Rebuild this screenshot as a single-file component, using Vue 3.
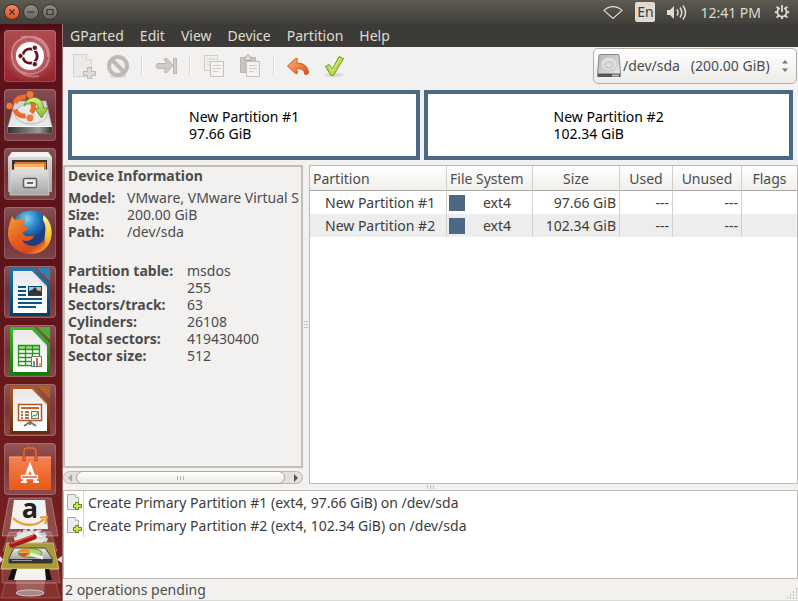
<script setup>
import { ref } from 'vue'

const menus = ['GParted', 'Edit', 'View', 'Device', 'Partition', 'Help']
const launchers = ['Search your computer', 'Install Ubuntu', 'Files', 'Firefox', 'Writer', 'Calc', 'Impress', 'Software Center']
const device = ref('sda')
const partitions = [
  { name: 'New Partition #1', fs: 'ext4', size: '97.66 GiB', grow: 352 },
  { name: 'New Partition #2', fs: 'ext4', size: '102.34 GiB', grow: 369 }
]
const summary = [
  ['Model:', 'VMware, VMware Virtual S'],
  ['Size:', '200.00 GiB'],
  ['Path:', '/dev/sda']
]
const geometry = [
  ['Partition table:', 'msdos'],
  ['Heads:', '255'],
  ['Sectors/track:', '63'],
  ['Cylinders:', '26108'],
  ['Total sectors:', '419430400'],
  ['Sector size:', '512']
]
const operations = [
  'Create Primary Partition #1 (ext4, 97.66 GiB) on /dev/sda',
  'Create Primary Partition #2 (ext4, 102.34 GiB) on /dev/sda'
]
</script>

<template>
  <div class="desktop">
    <header class="panel">
      <div class="window-buttons">
        <button class="wb close" aria-label="Close"><svg viewBox="0 0 16 16"><path d="M5.5 5.5l5 5M10.5 5.5l-5 5" /></svg></button>
        <button class="wb" aria-label="Minimize"><svg viewBox="0 0 16 16"><path d="M4.500 8h7" /></svg></button>
        <button class="wb" aria-label="Maximize"><svg viewBox="0 0 16 16"><path d="M5 5.500h6v5H5z" /></svg></button>
      </div>
      <div class="indicators">
        <svg class="ind" viewBox="0 0 20 20" aria-hidden="true"><path d="M1 8.500C6 3.300 14 3.300 19 8.500L10 16.500z" fill="none" stroke="#dfdbd2" stroke-width="1.100" /></svg>
        <span class="lang">En</span>
        <svg class="ind" viewBox="0 0 20 20" aria-hidden="true">
          <path d="M0 8h3l4-4v13l-4-4H0z" fill="#dfdbd2" />
          <path d="M10 7.500q2 3 0 6M13 5.500q3.500 5 0 10M16 3.500q5 7 0 14" fill="none" stroke="#dfdbd2" stroke-width="1.500" />
        </svg>
        <time class="clock">12:41 PM</time>
        <svg class="gear" viewBox="0 0 18 18" aria-hidden="true">
          <g stroke="#dfdbd2" fill="none">
            <path d="M6.500 4.500a5.200 5.200 0 1 0 5 0" stroke-width="2" />
            <path d="M9 1v8" stroke-width="2" />
            <path d="M9 14v3M1 9.300h3M14 9.300h3M3 3l2.500 2.500M15 3l-2.500 2.500M3 15.300l2.200-2.200M15 15.300l-2.200-2.200" stroke-width="2.200" />
          </g>
        </svg>
      </div>
    </header>

    <div class="body">
      <nav class="launcher" aria-label="Launcher">
        <button v-for="(name, i) in launchers" :key="name" class="tile" :class="{ dash: i === 0 }" :aria-label="name">
          <svg v-if="i === 0" viewBox="0 0 52 52">
            <defs><radialGradient id="dashbg"><stop offset="0" stop-color="#e8b8b8" /><stop offset=".6" stop-color="#c06468" /><stop offset="1" stop-color="#a73a40" stop-opacity="0" /></radialGradient></defs>
            <circle cx="26" cy="26" r="27" fill="url(#dashbg)" opacity=".75" />
            <path d="M8 22C9 10 24 3 36 9c10 6 12 20 5 29M44 30c-2 12-17 18-28 11C8 35 6 26 9 18M17 7c13-2 27 5 27 20M35 46C21 49 7 39 8 25" fill="none" stroke="#fff" stroke-opacity=".35" stroke-width="1.500" />
            <circle cx="26" cy="26" r="14" fill="#fff" />
            <circle cx="26" cy="26" r="7.200" fill="none" stroke="#64141d" stroke-width="2.800" stroke-dasharray="13 2.080" stroke-dashoffset="6.500" />
            <g fill="#64141d" stroke="#fff"><circle cx="16.500" cy="26" r="2.700" /><circle cx="30.800" cy="17.800" r="2.700" /><circle cx="30.800" cy="34.200" r="2.700" /></g>
          </svg>
          <svg v-else-if="i === 1" viewBox="0 0 52 52">
            <defs>
              <linearGradient id="diskTop" x2="0" y2="1"><stop stop-color="#cfcfcf" /><stop offset="1" stop-color="#f2f2f2" /></linearGradient>
              <linearGradient id="diskFront"><stop stop-color="#333" /><stop offset=".7" stop-color="#9c9c9c" /><stop offset="1" stop-color="#333" /></linearGradient>
              <linearGradient id="greenArrow" x2="0" y2="1"><stop stop-color="#d9ef85" /><stop offset="1" stop-color="#86b52e" /></linearGradient>
            </defs>
            <path d="M11 12h31l6 26v6H4v-6z" fill="url(#diskTop)" stroke="#aaa" stroke-width=".7" />
            <ellipse cx="27" cy="25" rx="16" ry="10" fill="#e8e8e8" stroke="#bbb" />
            <path d="M4 38h44v6H4z" fill="url(#diskFront)" />
            <path d="M4 37.500h44" stroke="#fff" />
            <circle cx="20" cy="17.500" r="9.500" fill="none" stroke="#f26a22" stroke-width="5" stroke-dasharray="13.500 6.400" stroke-dashoffset="6.750" />
            <g fill="#f47b32"><circle cx="5.500" cy="17" r="3.200" /><circle cx="26" cy="5.500" r="3.400" /><circle cx="26" cy="29" r="3.400" /></g>
            <path d="M20 17c2-10 16-12 19-1l.5 3H44l-6.500 10L31 19.500h3.500c-1-7-9-8-14.500-2.500z" fill="url(#greenArrow)" stroke="#6a9620" />
          </svg>
          <svg v-else-if="i === 2" viewBox="0 0 52 52">
            <defs><linearGradient id="cab" x2="0" y2="1"><stop stop-color="#e0e0e0" /><stop offset="1" stop-color="#a5a5a5" /></linearGradient></defs>
            <path d="M8 4h36l4 5v35H4V9z" fill="url(#cab)" />
            <path d="M8 4h36l3 5H5z" fill="#f3f3f3" />
            <path d="M8 12h35v12H8z" fill="#3b302b" />
            <path d="M11 14h31v8H11z" fill="#e0772f" /><path d="M10 16h30v7H10z" fill="#f7b26a" /><path d="M11 19h29v5H11z" fill="#fbe1bd" />
            <path d="M7 22h37l1 25H6z" fill="url(#cab)" stroke="#d8d8d8" stroke-width=".8" />
            <rect x="19.500" y="30.500" width="13" height="9" rx="1.500" fill="#eee" stroke="#5f5f5f" stroke-width="1.500" />
            <path d="M23 35h6" stroke="#666" stroke-width="2" />
          </svg>
          <svg v-else-if="i === 3" viewBox="0 0 52 52">
            <defs>
              <radialGradient id="globe" cx=".4" cy=".2"><stop stop-color="#7fd1f4" /><stop offset=".5" stop-color="#2b86c9" /><stop offset="1" stop-color="#173f86" /></radialGradient>
              <linearGradient id="fox" x2=".8" y2="1"><stop stop-color="#f6a233" /><stop offset=".45" stop-color="#e6601e" /><stop offset=".8" stop-color="#d5491d" /><stop offset="1" stop-color="#f7b52c" /></linearGradient>
              <linearGradient id="tail" x2="0" y2="1"><stop stop-color="#fff3a0" /><stop offset=".5" stop-color="#fccf37" /><stop offset="1" stop-color="#ef7f22" /></linearGradient>
            </defs>
            <circle cx="27" cy="24" r="20.500" fill="url(#globe)" />
            <path d="M8 9c1 2 2 3 3 4 2-1 4-1 6 0l4-3c0 3-1 5-3 7 1 2 4 2 7 3-1 3-4 4-6 5 0 2 1 3 3 4 3 1 5-1 8 0-2 5-7 6-12 4 4 7 15 8 21 1 5-6 6-13 3-20 6 7 7 16 2 24-4 6-10 9-17 9C14 47 4 38 4 27 4 19 6 16 8 9z" fill="url(#fox)" />
            <path d="M39 8c5 3 8 9 8.500 15 1 9-3 17-9 21 3-6 3-9 2-13 1-7 2-12-1.500-18 0-2 0-3 0-5z" fill="url(#tail)" />
          </svg>
          <svg v-else-if="i < 7" viewBox="0 0 52 52" class="doc" :class="['', '', '', '', 'writer', 'calc', 'impress'][i]">
            <defs><linearGradient :id="'edge' + i" x2="0" y2="1"><stop class="s1" /><stop offset="1" class="s2" /></linearGradient><linearGradient id="paper" x2="0" y2="1"><stop stop-color="#e9e9e9" /><stop offset="1" stop-color="#fff" /></linearGradient></defs>
            <path d="M6 2h24l16 16v32H6z" :fill="`url(#edge${i})`" />
            <path class="corner" d="M33 2h13v13z" />
            <path d="M9 5h19l15 15v27H9z" fill="url(#paper)" />
            <path d="M28 5l1 0 14 14v3z" fill="#888" opacity=".35" />
            <g v-if="i === 4">
              <path d="M14 21h8M14 25h8M14 29h8M14 33h24M14 37h24M14 41h18" stroke="#0b5488" stroke-width="2" />
              <rect x="24.500" y="20.500" width="13" height="9" fill="#8fc7ee" stroke="#0b4a78" />
              <path d="M25 29v-4l3-1 3-3 3 4 2-1 1 2v3z" fill="#333" /><circle cx="35" cy="23" r="1.500" fill="#e8c33a" />
            </g>
            <g v-else-if="i === 5">
              <path d="M14.500 20.500h21v20h-21z" fill="#fff" /><path d="M15 21h20v4H15z" fill="#8fdc7a" />
              <path d="M14.500 20.500h21v20h-21zM14.500 24.500h21M14.500 28.500h21M14.500 32.500h21M14.500 36.500h21M21.500 20v20M28.500 20v20" fill="none" stroke="#259515" stroke-width="1.300" />
              <rect x="27.500" y="31.500" width="10" height="10" fill="#fff" stroke="#777" /><path d="M29 36h2v5h-2z" fill="#3c9bd8" /><path d="M32 33h2v8h-2z" fill="#e06427" /><path d="M35 38h2v3h-2z" fill="#eabc2e" />
            </g>
            <g v-else>
              <rect x="14.500" y="20.500" width="23" height="16" fill="#fff" stroke="#b7551d" stroke-width="1.500" />
              <path d="M17 24h18" stroke="#c96026" stroke-width="2" /><path d="M17 28h2M21 28h4M17 31h2M21 31h4M17 34h2M21 34h4" stroke="#8d4016" stroke-width="1.500" />
              <rect x="27.500" y="27.500" width="7" height="7" fill="#eee" stroke="#777" /><path d="M28 33l2-2 2 1 2-4" fill="none" stroke="#3a9c20" />
              <path d="M20 42l6-4 6 4M26 37v4" fill="none" stroke="#777" stroke-width="2" />
            </g>
          </svg>
          <svg v-else viewBox="0 0 52 52">
            <defs><linearGradient id="bag" x2="0" y2="1"><stop stop-color="#f58252" /><stop offset="1" stop-color="#e8581a" /></linearGradient></defs>
            <path d="M5 14h42v33H5z" fill="url(#bag)" /><path d="M5 14h42" stroke="#ffae83" />
            <path d="M20 18V9q0-4 3-4h6q3 0 3 4v9" fill="none" stroke="#a8441f" stroke-width="3" /><path d="M20 17V9q0-4 3-4h6q3 0 3 4v8" fill="none" stroke="#e66a3c" stroke-width="1.500" />
            <path d="M20 39l6-16 6 16" fill="none" stroke="#fff" stroke-width="3.200" /><path d="M17 39h6M29 39h6" stroke="#fff" stroke-width="2" />
            <rect x="17.500" y="32.500" width="16" height="3" fill="#ef6e38" stroke="#fff" stroke-width="1.300" />
          </svg>
        </button>
        <div class="folded" role="img" aria-label="More applications">
          <svg viewBox="0 0 62 104">
            <defs><linearGradient id="fd" x2="0" y2="1"><stop stop-color="#eee" /><stop offset="1" stop-color="#8b8b8b" /></linearGradient></defs>
            <path d="M9 1h42l7 38H2z" fill="#fff" fill-opacity=".2" stroke="#fff" stroke-opacity=".3" />
            <path d="M14 3h31l3 29H10z" fill="#f2f2f2" />
            <text x="30" y="21" text-anchor="middle" class="amazon">a</text>
            <path d="M13 21c9 9 23 9 31 1" fill="none" stroke="#f29a22" stroke-width="2.200" /><path d="M40 20.500l7-.5-2 7" fill="none" stroke="#f29a22" stroke-width="2" />
            <path d="M9 35h42l6 19H3z" fill="#fff" fill-opacity=".16" stroke="#fff" stroke-opacity=".25" />
            <ellipse cx="31" cy="41" rx="15" ry="7" fill="#ececec" stroke="#d5d5d5" stroke-width="4" stroke-dasharray="4 2.500" />
            <ellipse cx="31" cy="41" rx="14" ry="6" fill="#e6e6e6" />
            <path d="M7 46h46l6 26H1z" fill="#ab9a3a" stroke="#c9bb5c" />
            <path d="M33 37q2-5 9-4l-3 2 2 3 6-1q-3 5-9 4z" fill="#eee" stroke="#999" stroke-width=".6" />
            <path d="M12 48l22-8" stroke="#a81a1a" stroke-width="5.500" stroke-linecap="round" /><path d="M11 46.500l22-8" stroke="#ec6a5e" stroke-width="1.200" />
            <path d="M14 51h31l7 10v5H9v-5z" fill="url(#fd)" stroke="#444" /><path d="M9 62h43v4H9z" fill="#333" /><path d="M12 63.500h20" stroke="#999" />
            <ellipse cx="30" cy="56" rx="12" ry="4.500" fill="#a9d86b" stroke="#638d35" /><path d="M30 56l-11-1q1-4 10-3.500z" fill="#f58c31" /><path d="M30 56H18.500q0 3.500 6 4z" fill="#e94c2f" /><path d="M30 57l13 4" stroke="#eee" stroke-width="3" />
            <path d="M2 72h56l2 14H2z" fill="#fff" fill-opacity=".12" stroke="#fff" stroke-opacity=".2" />
            <path d="M12 72h37l3 11H8z" fill="#111" /><path d="M17 72h28l1 11H14z" fill="#f2f2f2" />
            <path d="M5 86h51l4 15H1z" fill="#fff" fill-opacity=".08" stroke="#fff" stroke-opacity=".2" />
            <path d="M16 83h29l-1 14H17z" fill="#fff" fill-opacity=".22" /><ellipse cx="30" cy="96" rx="14" ry="3" fill="#a08a88" stroke="#d2c5c2" />
            <path d="M0 59l3 3.500-3 3.500zM62 59l-5 3.500 5 3.500z" fill="#e6e1dc" />
          </svg>
        </div>
      </nav>

      <main class="window">
        <nav class="menubar" aria-label="Menu">
          <button v-for="m in menus" :key="m" class="menu">{{ m }}</button>
        </nav>

        <div class="toolbar">
          <div class="tools">
            <button class="tool" aria-label="New" disabled>
              <svg viewBox="0 0 24 24"><path d="M3.500 .5h13l5 5v17h-18z" fill="#eceae8" stroke="#d5d2cf" /><path d="M16.500 .5v5h5" fill="#f7f6f5" stroke="#d5d2cf" /><path d="M17.500 13.500h4v4h4v4h-4v3h-4v-3h-4v-4h4z" fill="#dddcd5" stroke="#b9b9b0" /></svg>
            </button>
            <button class="tool" aria-label="Delete" disabled>
              <svg viewBox="0 0 24 24"><ellipse cx="12" cy="22" rx="9" ry="2" fill="#dedbd9" /><circle cx="12" cy="12" r="9" fill="#f0eeec" stroke="#bfbab7" stroke-width="4" /><path d="M6 6l12 12" stroke="#bfbab7" stroke-width="4" /></svg>
            </button>
            <span class="sep"></span>
            <button class="tool" aria-label="Resize/Move" disabled>
              <svg viewBox="0 0 24 24"><path d="M3 9.500h9v-1l-2-3q1-2 3-1l6 7-6 7q-2 1-3-1l2-3H3q-2-2.500 0-5z" fill="#cfcac7" stroke="#bdb7b4" /><rect x="19.500" y="4.500" width="3" height="15" fill="#d2cdca" stroke="#bdb7b4" /></svg>
            </button>
            <span class="sep"></span>
            <button class="tool" aria-label="Copy" disabled>
              <svg viewBox="0 0 24 24"><path d="M2.500 1.500h13v15h-13z" fill="#f0efed" stroke="#cfccc9" /><path d="M5 5h8M5 8h8M5 11h4" stroke="#d3d0cd" /><path d="M8.500 7.500h13v15h-13z" fill="#f4f3f2" stroke="#c4c1be" /><path d="M11 11.500h8M11 14.500h8M11 17.500h5" stroke="#cfccc9" /></svg>
            </button>
            <button class="tool" aria-label="Paste" disabled>
              <svg viewBox="0 0 24 24"><path d="M2.500 3.500h15v15h-15z" fill="#c8c4c1" stroke="#b9b5b2" /><path d="M7 6.500v-3l3-3 3 3v3z" fill="#dedbd9" stroke="#aaa6a3" /><path d="M8.500 7.500h13v15h-13z" fill="#f4f3f2" stroke="#c4c1be" /><path d="M11 11.500h8M11 14.500h8M11 17.500h5" stroke="#cfccc9" /></svg>
            </button>
            <span class="sep"></span>
            <button class="tool" aria-label="Undo">
              <svg viewBox="0 0 24 24"><defs><linearGradient id="undo" x2="1" y2="1"><stop stop-color="#f9b27c" /><stop offset=".5" stop-color="#ee8545" /><stop offset="1" stop-color="#e2461a" /></linearGradient></defs><path d="M1.500 12L9.500 4.500q2-1 2 1l-1 3.500c7 0 11.500 3 12 10q-1 2.500-4 1c0-4-3-5.500-8-5.500l1 4q0 2-2 1z" fill="url(#undo)" stroke="#c55a28" /></svg>
            </button>
            <button class="tool" aria-label="Apply">
              <svg viewBox="0 0 24 24"><ellipse cx="12" cy="21" rx="10" ry="2" fill="#dddbd7" /><path d="M3.500 12.500l3.500-2 3.500 4.500 6.500-12.500 4.500 2-10 17H9z" fill="#b8da4c" stroke="#6c9a22" /><path d="M7 12l3.500 5L18 4" fill="none" stroke="#daef8d" /></svg>
            </button>
          </div>
          <label class="device">
            <svg class="disk" viewBox="0 0 24 24" aria-hidden="true"><defs><linearGradient id="hd" x2="1" y2="1"><stop stop-color="#b3b3b3" /><stop offset="1" stop-color="#ededed" /></linearGradient></defs><path d="M2 1.500q0-1 1-1h18q1 0 1 1l1.500 18v3H.5v-3z" fill="url(#hd)" stroke="#888" /><ellipse cx="12" cy="10" rx="8" ry="7" fill="#dedede" stroke="#c6c6c6" /><ellipse cx="12" cy="11" rx="4" ry="3" fill="none" stroke="#bbb" /><path d="M1 19.500h22V23H1z" fill="#555" /><path d="M15 21.500h7" stroke="#bbb" stroke-width="2" /></svg>
            <select v-model="device" aria-label="Device">
              <option value="sda">/dev/sda&nbsp;&nbsp;&nbsp;(200.00 GiB)</option>
            </select>
            <svg class="arrows" viewBox="0 0 8 14" aria-hidden="true"><path d="M1 4.500L4 1l3 3.500zM1 9.500h6L4 13z" fill="#7a7874" /></svg>
          </label>
        </div>

        <section class="graphic" aria-label="Disk layout">
          <div v-for="p in partitions" :key="p.name" class="part" :style="{ flexGrow: p.grow }">
            <div>{{ p.name }}<br />{{ p.size }}</div>
          </div>
        </section>

        <section class="split">
          <div class="side">
            <div class="info">
              <h2>Device Information</h2>
              <dl class="short">
                <template v-for="row in summary" :key="row[0]"><dt>{{ row[0] }}</dt><dd>{{ row[1] }}</dd></template>
              </dl>
              <dl class="long">
                <template v-for="row in geometry" :key="row[0]"><dt>{{ row[0] }}</dt><dd>{{ row[1] }}</dd></template>
              </dl>
            </div>
            <div class="scroll">
              <button class="step" aria-label="Scroll left" disabled><svg viewBox="0 0 6 8"><path d="M5 0v8L1 4z" fill="#aaa7a2" /></svg></button>
              <div class="thumb"><i></i><i></i><i></i></div>
              <button class="step" aria-label="Scroll right"><svg viewBox="0 0 6 8"><path d="M1 0v8l4-4z" fill="#55534f" /></svg></button>
            </div>
          </div>
          <div class="grip vertical"><i></i><i></i><i></i></div>
          <div class="list">
            <table>
              <colgroup><col class="c1" /><col class="c2" /><col class="c3" /><col class="c4" /><col class="c5" /><col class="c6" /></colgroup>
              <thead>
                <tr><th class="first">Partition</th><th class="first">File System</th><th>Size</th><th>Used</th><th>Unused</th><th>Flags</th></tr>
              </thead>
              <tbody>
                <tr v-for="p in partitions" :key="p.name">
                  <td class="name">{{ p.name }}</td>
                  <td><div class="fs"><i class="swatch"></i><span>{{ p.fs }}</span></div></td>
                  <td class="num">{{ p.size }}</td>
                  <td class="num">---</td>
                  <td class="num">---</td>
                  <td></td>
                </tr>
              </tbody>
            </table>
          </div>
        </section>

        <div class="grip horizontal"><i></i><i></i><i></i></div>

        <ul class="operations">
          <li v-for="o in operations" :key="o">
            <span class="op-icon">
              <svg viewBox="0 0 16 16" aria-hidden="true"><path d="M1.500 .5h8l3 3v12h-11z" fill="#ececec" stroke="#a9a9a9" /><path d="M9.500 .5v3h3" fill="#fff" stroke="#bbb" /><path d="M9.500 8.500h3v2h3v3h-3v2h-3v-2h-2v-3h2z" fill="#c9e64d" stroke="#5b8a10" /></svg>
            </span>
            {{ o }}
          </li>
        </ul>

        <footer class="status">
          <span>2 operations pending</span>
          <svg class="resize" viewBox="0 0 12 12" aria-hidden="true"><path d="M10 1h1M7 4h1M10 4h1M4 7h1M7 7h1M10 7h1M1 10h1M4 10h1M7 10h1M10 10h1" stroke="#918e89" /></svg>
        </footer>
      </main>
    </div>
  </div>
</template>

<style>
body {
  margin: 0;
  overflow: hidden;
}
</style>

<style scoped>
* {
  box-sizing: border-box;
}
.desktop {
  height: 100vh;
  display: flex;
  flex-direction: column;
  font: 14px/17px "Noto Sans", "Open Sans", sans-serif;
  color: #4c4c4c;
  background: #f2f1f0;
}
button {
  font: inherit;
  color: inherit;
  border: 0;
  padding: 0;
  background: none;
}
svg {
  display: block;
}
.panel {
  flex: none;
  height: 24px;
  display: flex;
  justify-content: space-between;
  align-items: center;
  padding: 0 8px 0 4px;
  background: linear-gradient(#5d5a51, #403f3a);
  color: #dfdbd2;
}
.window-buttons {
  display: flex;
  gap: 3px;
}
.wb {
  width: 16px;
  height: 16px;
  border: 1px solid #35342f;
  border-radius: 50%;
  background: linear-gradient(#918f85, #66645c);
}
.wb svg {
  width: 16px;
  height: 16px;
  margin: -1px;
  fill: none;
  stroke: #35342f;
  stroke-width: 1.2;
}
.wb.close {
  background: linear-gradient(#f78860, #e34d20);
}
.indicators {
  display: flex;
  align-items: center;
}
.ind {
  width: 20px;
  height: 20px;
}
.lang {
  width: 20px;
  height: 20px;
  margin: 0 12px;
  border-radius: 2px;
  background: #dfdbd2;
  color: #3c3b37;
  line-height: 20px;
  text-align: center;
}
.clock {
  margin: 0 13px;
}
.gear {
  width: 16px;
  height: 18px;
}
.body {
  flex: 1;
  min-height: 0;
  display: flex;
}
.launcher {
  flex: none;
  width: 63px;
  padding: 6px 0 0 4px;
  display: flex;
  flex-direction: column;
  gap: 7px;
  overflow: hidden;
  border-right: 1px solid #9c7476;
  background: linear-gradient(#4c0c14, #5c121a 12px, #5e141a 45%, #7c211f);
}
.tile {
  flex: none;
  width: 52px;
  height: 52px;
  border-radius: 4px;
  background: linear-gradient(rgba(255, 255, 255, .26), rgba(255, 255, 255, .12) 50%, rgba(255, 255, 255, .2));
  box-shadow: inset 0 0 0 1px rgba(255, 255, 255, .16);
}
.tile svg {
  width: 52px;
  height: 52px;
}
.tile.dash {
  background: linear-gradient(#b04c52, #95242b);
}
.writer .s1 { stop-color: #2275ac; }
.writer .s2 { stop-color: #043f6b; }
.writer .corner { fill: #2f80b5; }
.calc .s1 { stop-color: #43b52d; }
.calc .s2 { stop-color: #137b09; }
.calc .corner { fill: #48b036; }
.impress .s1 { stop-color: #ae5b28; }
.impress .s2 { stop-color: #6b2a08; }
.impress .corner { fill: #b0602f; }
.folded {
  flex: none;
  width: 62px;
  height: 104px;
  margin: -5px 0 0 -4px;
}
.folded svg {
  overflow: visible;
}
.amazon {
  font: bold 27px "Open Sans", sans-serif;
  fill: #222;
}
.window {
  flex: 1;
  min-width: 0;
  display: flex;
  flex-direction: column;
}
.menubar {
  flex: none;
  height: 23px;
  display: flex;
  gap: 16px;
  padding: 0 7px;
  background: #3c3b37;
  color: #dfdbd2;
}
.toolbar {
  flex: none;
  height: 43px;
  display: flex;
  justify-content: space-between;
  padding: 1px 1px 0 1px;
}
.tools {
  display: flex;
  align-items: center;
  height: 36px;
}
.tool {
  width: 36px;
  height: 36px;
  display: grid;
  place-items: center;
}
.tool svg {
  width: 24px;
  height: 24px;
  overflow: visible;
}
.sep {
  width: 12px;
  height: 20px;
  background: linear-gradient(90deg, #dcd9d6 50%, #fff 50%) center / 2px 20px no-repeat;
}
.device {
  display: flex;
  align-items: center;
  width: 204px;
  height: 36px;
  padding: 0 7px 0 3px;
  border: 1px solid #b3b0aa;
  border-radius: 5px;
  background: linear-gradient(#fff, #ecebea);
}
.disk {
  flex: none;
  width: 24px;
  height: 24px;
}
.device select {
  flex: 1;
  min-width: 0;
  appearance: none;
  border: 0;
  padding: 0 2px;
  background: none;
  font: inherit;
  line-height: 20px;
  color: #4c4c4c;
  outline: none;
}
.arrows {
  flex: none;
  width: 8px;
  height: 14px;
}
.graphic {
  flex: none;
  display: flex;
  gap: 4px;
  height: 70px;
  margin: 0 5px 5px;
}
.part {
  flex-basis: 0;
  display: grid;
  place-content: center;
  border: 4px solid #4b6983;
  background: #fff;
  color: #000;
}
.split {
  flex: 1;
  min-height: 0;
  display: flex;
}
.side {
  flex: none;
  width: 240px;
  display: flex;
  flex-direction: column;
  gap: 3px;
}
.info {
  flex: 1;
  min-height: 0;
  overflow: hidden;
  padding: 0 0 0 3px;
  border: 2px solid #c2bfb8;
}
h2 {
  margin: 0 0 5px;
  font: inherit;
  font-weight: 700;
}
dl {
  display: grid;
  margin: 0;
  white-space: nowrap;
}
.short {
  grid-template-columns: 59px 1fr;
  margin-bottom: 22px;
}
.long {
  grid-template-columns: 119px 1fr;
}
dt {
  font-weight: 700;
}
dd {
  margin: 0;
}
.scroll {
  flex: none;
  height: 13px;
  display: flex;
  border: 1px solid #bcb8b1;
  border-radius: 7px;
  background: #e3e0dc;
}
.step {
  width: 12px;
  display: grid;
  place-items: center;
}
.step svg {
  width: 6px;
  height: 8px;
}
.thumb {
  flex: 1;
  margin: -1px 5px -1px 0;
  display: flex;
  align-items: center;
  justify-content: center;
  gap: 2px;
  border: 1px solid #aaa69e;
  border-radius: 7px;
  background: linear-gradient(#fff, #eceae8);
}
.thumb i {
  width: 1px;
  height: 4px;
  background: #b8b4ad;
}
.grip {
  flex: none;
  display: flex;
  align-items: center;
  justify-content: center;
  gap: 2px;
}
.vertical {
  width: 6px;
  flex-direction: column;
}
.vertical i {
  width: 4px;
  height: 1px;
  background: #c3c0bb;
}
.horizontal {
  height: 6px;
}
.horizontal i {
  width: 1px;
  height: 4px;
  background: #c3c0bb;
}
.list {
  flex: 1;
  min-width: 0;
  overflow: hidden;
  border: 1px solid #bfbbb4;
  background: #fff;
}
table {
  width: 100%;
  table-layout: fixed;
  border-collapse: separate;
  border-spacing: 0;
  white-space: nowrap;
}
.c1 { width: 137px; }
.c2 { width: 86px; }
.c3 { width: 87px; }
.c4 { width: 53px; }
.c5 { width: 69px; }
th {
  height: 25px;
  padding: 0 3px;
  font-weight: 400;
  border-right: 1px solid #d3d0cc;
  border-bottom: 1px solid #aaa8a4;
  background: linear-gradient(#fff, #f0efed);
}
.first {
  text-align: left;
}
td {
  height: 23px;
  padding: 0 3px 0 2px;
  border-right: 1px solid #d3d0cc;
  color: #3c3c3c;
}
th:last-child,
td:last-child {
  border-right: 0;
}
tbody tr:nth-child(even) {
  background: #ededed;
}
.name {
  padding-left: 15px;
}
.num {
  text-align: right;
}
.fs {
  display: flex;
  align-items: center;
}
.swatch {
  width: 16px;
  height: 16px;
  background: #4b6983;
}
.fs span {
  flex: 1;
  text-align: center;
}
.operations {
  flex: none;
  height: 89px;
  margin: 0;
  padding: 0;
  list-style: none;
  border: 1px solid #bfbbb4;
  background: #fff;
  color: #3c3c3c;
}
.operations li {
  display: flex;
  align-items: center;
  gap: 4px;
  height: 23px;
}
.op-icon {
  height: 23px;
  padding: 3px 1px 0 2px;
  border-right: 1px solid #d3d0cc;
}
.op-icon svg {
  width: 16px;
  height: 16px;
}
.status {
  flex: none;
  height: 22px;
  display: flex;
  justify-content: space-between;
  align-items: center;
  padding-left: 2px;
  border-bottom: 1px solid #dcdad7;
}
.resize {
  align-self: flex-end;
  width: 12px;
  height: 12px;
}
</style>
